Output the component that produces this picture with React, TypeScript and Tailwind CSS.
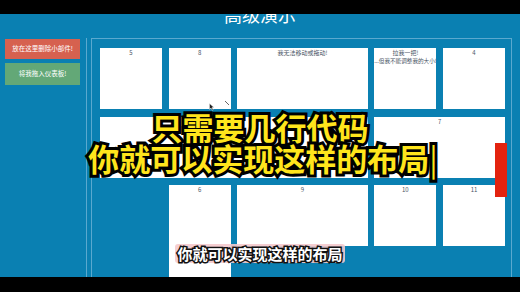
import React from "react";

const cjk = "'Noto Sans CJK SC', 'Noto Sans', sans-serif";

type Tile = {
  label?: string;
  sub?: string;
  cls: string;
  handle?: boolean;
};

const tiles: Tile[] = [
  { label: "5", cls: "col-start-1 row-start-1" },
  { label: "8", cls: "col-start-2 row-start-1", handle: true },
  { label: "我无法移动或拖动!", cls: "col-start-3 col-span-2 row-start-1" },
  { label: "拉我一把!", sub: "...但我不能调整我的大小!", cls: "col-start-5 row-start-1" },
  { label: "4", cls: "col-start-6 row-start-1" },
  { cls: "col-start-1 col-span-4 row-start-2" },
  { label: "7", cls: "col-start-5 col-span-2 row-start-2" },
  { label: "6", cls: "col-start-2 row-start-3 row-span-2" },
  { label: "9", cls: "col-start-3 col-span-2 row-start-3" },
  { label: "10", cls: "col-start-5 row-start-3" },
  { label: "11", cls: "col-start-6 row-start-3" },
];

function GridTile({ t }: { t: Tile }) {
  return (
    <div className={`relative bg-white text-center text-[6px] leading-[8px] text-gray-600 pt-[1px] ${t.cls}`}>
      <div>{t.label}</div>
      {t.sub && <div className="whitespace-nowrap text-[5.6px] -mx-[2px]">{t.sub}</div>}
      {t.handle && (
        <svg className="absolute right-[1px] bottom-[3px]" width="6" height="6" viewBox="0 0 6 6">
          <path d="M1 1 L5 5" stroke="#555" strokeWidth="0.9" />
        </svg>
      )}
    </div>
  );
}

export default function App() {
  return (
    <div className="relative w-[520px] h-[292px] overflow-hidden bg-black" style={{ fontFamily: cjk }}>
      <div className="h-[14px] bg-black" />
      <div className="relative h-[263px] overflow-hidden bg-[#0a80b2]">
        <div className="-mt-[10px] h-[20px] text-center text-white text-[18px] leading-[20px]">
          高级演示
        </div>
        <div className="mt-[14px] flex h-[260px]">
          <div className="w-[87px] border-r border-[#5aa9cf] pl-[5px] pr-[6px] pt-[1px] flex flex-col gap-[4px]">
            <div className="h-[20px] bg-[#d6614f] text-white text-[6.5px] flex items-center justify-center">
              放在这里删除小部件!
            </div>
            <div className="h-[22px] bg-[#63a877] text-white text-[6.5px] flex items-center justify-center">
              将我拖入仪表板!
            </div>
          </div>
          <div className="ml-[4px] w-[421px] border border-[#5aa9cf] pt-[9px] pl-[8px]">
            <div className="grid grid-cols-[repeat(6,62px)] auto-rows-[61px] gap-x-[6.6px] gap-y-[7.6px]">
              {tiles.map((t, i) => (
                <GridTile key={i} t={t} />
              ))}
            </div>
          </div>
        </div>
        <svg className="absolute left-[209px] top-[89px]" width="6" height="8" viewBox="0 0 6 8">
          <path d="M0.5 0.5 L0.5 6.5 L2 5 L3.3 7.5 L4.2 7 L3 4.6 L5 4.6 Z" fill="#222" stroke="#fff" strokeWidth="0.4" />
        </svg>
      </div>
      <div className="h-[15px] bg-black" />

      <div className="absolute left-[495px] top-[143px] w-[12px] h-[54px] bg-[#e3230f]" />

      <div className="absolute left-0 right-0 top-[111px] flex flex-col items-center text-[31px] leading-[32px] font-bold text-[#ffe51c] [-webkit-text-stroke:6px_#000] [paint-order:stroke_fill]">
        <div>只需要几行代码</div>
        <div className="-mt-[1px] pl-[6px]">
          你就可以实现这样的布局<span className="font-normal">|</span>
        </div>
      </div>

      <div className="absolute left-0 right-0 top-[244px] flex justify-center">
        <div className="px-[2px] rounded-[3px] bg-[#f4c9cc]/90 text-white text-[15px] leading-[19px] font-bold [-webkit-text-stroke:3px_#111] [paint-order:stroke_fill]">
          你就可以实现这样的布局
        </div>
      </div>
    </div>
  );
}
